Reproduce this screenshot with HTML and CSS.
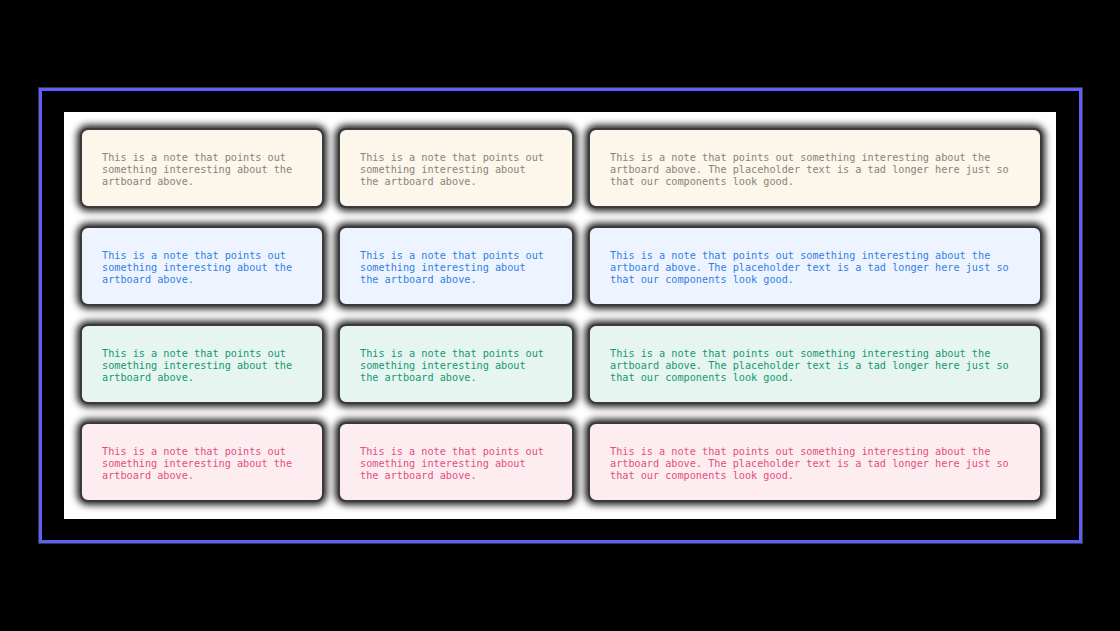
FILE: index.html
```html
<!DOCTYPE html>
<html lang="en">
<head>
<meta charset="utf-8">
<title>Notes</title>
<link rel="stylesheet" href="styles.css">
</head>
<body>
<div class="frame">
  <div class="artboard">
    <div class="grid">
      <div class="note note-cream">This is a note that points out something interesting about the artboard above.</div>
      <div class="note note-cream">This is a note that points out something interesting about the artboard above.</div>
      <div class="note note-cream">This is a note that points out something interesting about the artboard above. The placeholder text is a tad longer here just so that our components look good.</div>

      <div class="note note-blue">This is a note that points out something interesting about the artboard above.</div>
      <div class="note note-blue">This is a note that points out something interesting about the artboard above.</div>
      <div class="note note-blue">This is a note that points out something interesting about the artboard above. The placeholder text is a tad longer here just so that our components look good.</div>

      <div class="note note-green">This is a note that points out something interesting about the artboard above.</div>
      <div class="note note-green">This is a note that points out something interesting about the artboard above.</div>
      <div class="note note-green">This is a note that points out something interesting about the artboard above. The placeholder text is a tad longer here just so that our components look good.</div>

      <div class="note note-pink">This is a note that points out something interesting about the artboard above.</div>
      <div class="note note-pink">This is a note that points out something interesting about the artboard above.</div>
      <div class="note note-pink">This is a note that points out something interesting about the artboard above. The placeholder text is a tad longer here just so that our components look good.</div>
    </div>
  </div>
</div>
</body>
</html>
```

FILE: styles.css
```css
html, body {
  margin: 0;
  padding: 0;
  background: #000;
}

body {
  width: 1120px;
  height: 631px;
  overflow: hidden;
  padding-top: 88px;
  box-sizing: border-box;
}

.frame {
  margin-left: 39px;
  width: 1043px;
  box-sizing: border-box;
  border: 3px solid #5d5efb;
  box-shadow: 0 0 0 1px #3a3a3a;
  padding: 21px 23px 21px 22px;
}

.artboard {
  background: #fff;
  padding: 16px 14px 17px 16px;
}

.grid {
  display: grid;
  grid-template-columns: 244px 236px 1fr;
  column-gap: 14px;
  row-gap: 18px;
}

.note {
  box-sizing: border-box;
  height: 80px;
  display: flex;
  align-items: center;
  padding: 4px 25px 0 20px;
  border: 2px solid #3a3a3a;
  border-radius: 8px;
  box-shadow: 0 0 7px 3px rgba(0, 0, 0, 0.88);
  font-family: "DejaVu Sans Mono", "Liberation Mono", monospace;
  font-size: 10.2px;
  line-height: 12px;
}

.note-cream {
  background: #fdf6ea;
  color: #87837a;
}

.note-blue {
  background: #eef4ff;
  color: #3080e4;
}

.note-green {
  background: #e7f5f0;
  color: #0f9970;
}

.note-pink {
  background: #fdedf1;
  color: #e24f7b;
}
```
